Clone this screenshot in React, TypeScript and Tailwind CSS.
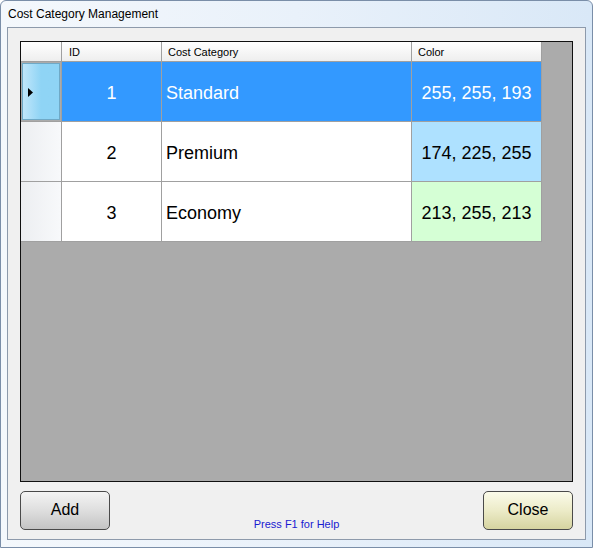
import React from 'react';

type Row = { id: number; name: string; color: [number, number, number] };

const ROWS: Row[] = [
  { id: 1, name: 'Standard', color: [255, 255, 193] },
  { id: 2, name: 'Premium', color: [174, 225, 255] },
  { id: 3, name: 'Economy', color: [213, 255, 213] },
];

const SELECTED = 1;

const font = { fontFamily: '"Liberation Sans", Arial, sans-serif' };

export default function App() {
  return (
    <div
      className="w-[593px] h-[548px] flex flex-col rounded-t-[6px] border border-[#7a8ea8] bg-gradient-to-r from-[#f4f8fc] via-[#e9f1fa] to-[#d9e8f7] overflow-hidden"
      style={font}
    >
      {/* title bar */}
      <div className="h-[26px] shrink-0 flex items-center pl-[7px] text-[12px] text-black">
        Cost Category Management
      </div>

      {/* client area */}
      <div className="flex-1 mx-[6px] mb-[7px] border border-[#8d9aab] bg-[#f0f0f0] flex flex-col px-[12px] pt-[13px]">
        {/* grid */}
        <div className="h-[441px] border border-[#101010] bg-[#ababab] flex flex-col">
          {/* header */}
          <div className="flex h-[20px] text-[11px] text-black">
            <div className="w-[41px] border-r border-b border-[#a0a0a0] bg-gradient-to-b from-white to-[#eeeeee]" />
            <div className="w-[100px] border-r border-b border-[#a0a0a0] bg-gradient-to-b from-white to-[#eeeeee] pl-[7px] pt-[1px] leading-[19px]">
              ID
            </div>
            <div className="w-[250px] border-r border-b border-[#a0a0a0] bg-gradient-to-b from-white to-[#eeeeee] pl-[6px] pt-[1px] leading-[19px]">
              Cost Category
            </div>
            <div className="w-[130px] border-r border-b border-[#a0a0a0] bg-gradient-to-b from-white to-[#eeeeee] pl-[6px] pt-[1px] leading-[19px]">
              Color
            </div>
          </div>

          {ROWS.map((r) => {
            const sel = r.id === SELECTED;
            return (
              <div key={r.id} className="flex h-[60px] text-[18px]">
                {sel ? (
                  <div className="w-[41px] border-r border-b border-[#a0a0a0] flex p-[1px]">
                    <div className="flex-1 flex items-center pt-[2px] bg-gradient-to-r from-[#bfe6fa] via-[#8fd4f5] to-[#8fd4f5] border border-[#6fa9c6]">
                      <svg width="6" height="9" viewBox="0 0 6 9" className="ml-[5px]">
                        <path d="M0 0 L5 4.5 L0 9 Z" fill="#000" />
                      </svg>
                    </div>
                  </div>
                ) : (
                  <div className="w-[41px] border-r border-b border-[#a0a0a0] bg-gradient-to-r from-[#eceef1] to-[#f8f9fb]" />
                )}
                <div
                  className={`w-[100px] border-r border-b border-[#a0a0a0] flex items-center justify-center pt-[3px] ${
                    sel ? 'bg-[#3399ff] text-white' : 'bg-white text-black'
                  }`}
                >
                  {r.id}
                </div>
                <div
                  className={`w-[250px] border-r border-b border-[#a0a0a0] flex items-center pl-[4px] pt-[3px] ${
                    sel ? 'bg-[#3399ff] text-white' : 'bg-white text-black'
                  }`}
                >
                  {r.name}
                </div>
                <div
                  className={`w-[130px] border-r border-b border-[#a0a0a0] flex items-center justify-center pt-[3px] ${
                    sel ? 'text-white' : 'text-black'
                  }`}
                  style={{
                    backgroundColor: sel ? '#3399ff' : `rgb(${r.color.join(',')})`,
                  }}
                >
                  {r.color.join(', ')}
                </div>
              </div>
            );
          })}
        </div>

        {/* bottom bar */}
        <div className="flex mt-[9px] h-[39px]">
          <button className="w-[90px] h-[39px] rounded-[5px] border border-[#4a4a4a] bg-gradient-to-b from-[#f4f4f4] via-[#dedede] to-[#c4c4c4] text-[16px] text-black pb-[2px]">
            Add
          </button>
          <div className="flex-1 flex items-end justify-center text-[11px] text-[#1a1ad0] leading-[12px]">
            Press F1 for Help
          </div>
          <button className="w-[90px] h-[39px] rounded-[5px] border border-[#4a4a4a] bg-gradient-to-b from-[#fbfbea] via-[#ecebc8] to-[#d6d4a0] text-[16px] text-black pb-[2px]">
            Close
          </button>
        </div>
      </div>
    </div>
  );
}
